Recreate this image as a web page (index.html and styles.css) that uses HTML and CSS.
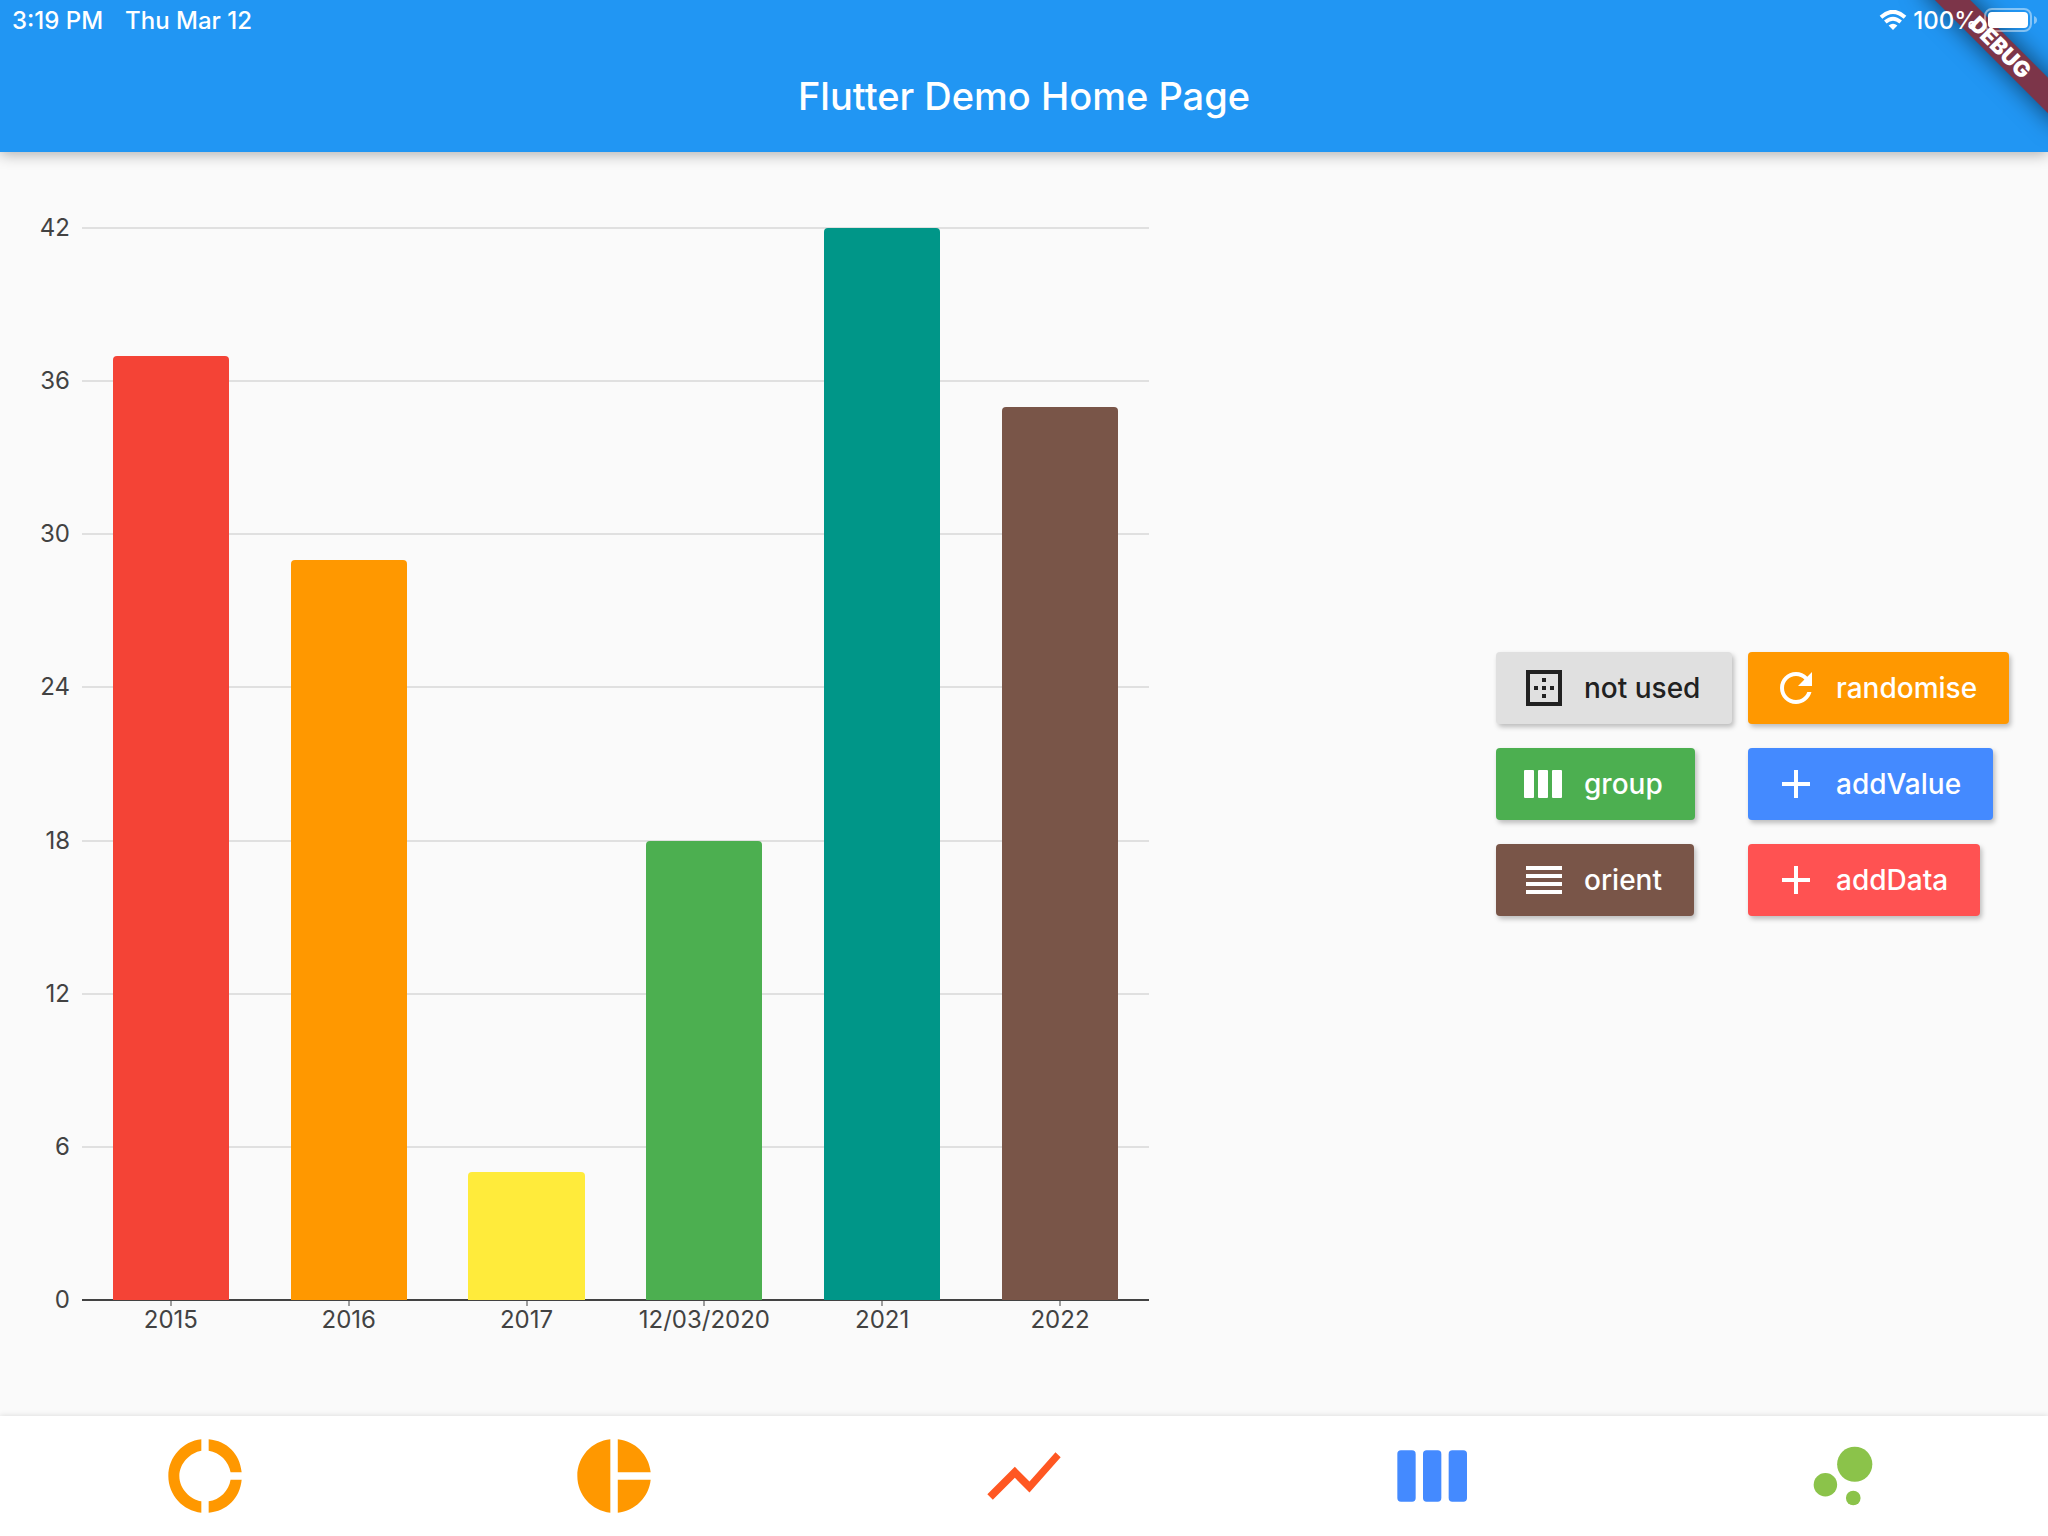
FILE: index.html
```html
<!DOCTYPE html>
<html lang="en">
<head>
<meta charset="utf-8">
<meta name="viewport" content="width=device-width, initial-scale=1">
<title>Flutter Demo Home Page</title>
<link rel="stylesheet" href="styles.css">
</head>
<body>
<header class="app-bar">
  <div class="debug-banner">DEBUG</div>
  <div class="status">
    <span>3:19 PM</span>
    <span class="status-date">Thu Mar 12</span>
    <svg class="wifi" viewBox="0 0 28 20" aria-hidden="true">
      <path d="M2 7.200Q14-3.600 26 7.200" fill="none" stroke="#fff" stroke-width="4"/>
      <path d="M6.300 12Q14 5.400 21.700 12" fill="none" stroke="#fff" stroke-width="3.800"/>
      <path d="M14 20l-4.400-4.500q4.400-3.600 8.800 0z" fill="#fff"/>
    </svg>
    <span>100%</span>
    <svg class="battery" viewBox="0 0 54 24" aria-hidden="true">
      <rect x="1" y="1" width="46" height="22" rx="7" fill="none" stroke="#fff" stroke-opacity=".45" stroke-width="2"/>
      <rect x="4" y="4" width="40" height="16" rx="4" fill="#fff"/>
      <path d="M50 8q3 1 3 4t-3 4z" fill="#fff" fill-opacity=".45"/>
    </svg>
  </div>
  <h1 class="title">Flutter Demo Home Page</h1>
</header>

<main class="content">
  <section class="chart" aria-label="Bar chart">
    <div class="plot">
      <ol class="scale">
        <li>42</li>
        <li>36</li>
        <li>30</li>
        <li>24</li>
        <li>18</li>
        <li>12</li>
        <li>6</li>
        <li class="axis">0</li>
      </ol>
      <div class="bars">
        <div class="bar red" style="height: 88.1%"></div>
        <div class="bar orange" style="height: 69.05%"></div>
        <div class="bar yellow" style="height: 11.9%"></div>
        <div class="bar green" style="height: 42.86%"></div>
        <div class="bar teal" style="height: 100%"></div>
        <div class="bar brown" style="height: 83.33%"></div>
      </div>
    </div>
    <ol class="categories">
      <li>2015</li>
      <li>2016</li>
      <li>2017</li>
      <li>12/03/2020</li>
      <li>2021</li>
      <li>2022</li>
    </ol>
  </section>

  <section class="controls" aria-label="Chart controls">
    <button class="button plain" type="button">
      <svg class="icon" viewBox="0 0 24 24" aria-hidden="true"><path d="M13 7h-2v2h2V7zm0 4h-2v2h2v-2zm4 0h-2v2h2v-2zM3 3v18h18V3H3zm16 16H5V5h14v14zm-6-4h-2v2h2v-2zm-4-4H7v2h2v-2z"/></svg>
      not used
    </button>
    <button class="button orange" type="button">
      <svg class="icon" viewBox="0 0 24 24" aria-hidden="true"><path d="M17.65 6.35C16.2 4.900 14.210 4 12 4c-4.420 0-7.990 3.580-7.990 8s3.570 8 7.990 8c3.730 0 6.840-2.550 7.730-6h-2.080c-.82 2.330-3.040 4-5.650 4-3.310 0-6-2.690-6-6s2.690-6 6-6c1.660 0 3.140.69 4.220 1.780L13 11h7V4l-2.350 2.350z"/></svg>
      randomise
    </button>
    <button class="button green" type="button">
      <svg class="icon" viewBox="0 0 24 24" aria-hidden="true"><rect x="2" y="5" width="5" height="14" rx=".5"/><rect x="9" y="5" width="5" height="14" rx=".5"/><rect x="16" y="5" width="5" height="14" rx=".5"/></svg>
      group
    </button>
    <button class="button blue" type="button">
      <svg class="icon" viewBox="0 0 24 24" aria-hidden="true"><path d="M19 13h-6v6h-2v-6H5v-2h6V5h2v6h6v2z"/></svg>
      addValue
    </button>
    <button class="button brown" type="button">
      <svg class="icon" viewBox="0 0 24 24" aria-hidden="true"><path d="M3 15h18v-2H3v2zm0 4h18v-2H3v2zm0-8h18V9H3v2zm0-6v2h18V5H3z"/></svg>
      orient
    </button>
    <button class="button coral" type="button">
      <svg class="icon" viewBox="0 0 24 24" aria-hidden="true"><path d="M19 13h-6v6h-2v-6H5v-2h6V5h2v6h6v2z"/></svg>
      addData
    </button>
  </section>
</main>

<nav class="tabs" aria-label="Chart types">
  <a class="tab amber" href="#donut" aria-label="Donut chart"><svg class="tab-icon" viewBox="0 0 24 24"><path d="M11 5.080V2c-5 .5-9 4.810-9 10s4 9.500 9 10v-3.080c-3-.48-6-3.400-6-6.920s3-6.440 6-6.920zM18.970 11H22c-.47-5-4-8.530-9-9v3.080C16 5.510 18.540 8 18.970 11zM13 18.920V22c5-.47 8.530-4 9-9h-3.030c-.43 3-2.970 5.490-5.970 5.920z"/></svg></a>
  <a class="tab amber" href="#pie" aria-label="Pie chart"><svg class="tab-icon" viewBox="0 0 24 24"><path d="M11 2v20c-5.070-.5-9-4.790-9-10s3.930-9.500 9-10zm2.030 0v8.990H22c-.47-4.740-4.240-8.520-8.970-8.990zm0 11.010V22c4.740-.47 8.500-4.250 8.970-8.990h-8.970z"/></svg></a>
  <a class="tab vermilion" href="#line" aria-label="Line chart"><svg class="tab-icon" viewBox="0 0 24 24"><path d="M3.500 18.490l6-6.010 4 4L22 6.920l-1.410-1.410-7.090 7.970-4-4L2 16.990z"/></svg></a>
  <a class="tab azure" href="#bar" aria-label="Bar chart" aria-current="page"><svg class="tab-icon" viewBox="0 0 24 24"><rect x="2" y="5" width="5" height="14" rx="1"/><rect x="9" y="5" width="5" height="14" rx="1"/><rect x="16" y="5" width="5" height="14" rx="1"/></svg></a>
  <a class="tab lime" href="#bubble" aria-label="Bubble chart"><svg class="tab-icon" viewBox="0 0 24 24"><circle cx="7.200" cy="14.400" r="3.200"/><circle cx="14.800" cy="18" r="2"/><circle cx="15.200" cy="8.800" r="4.800"/></svg></a>
</nav>
</body>
</html>
```
FILE: styles.css
```css
* {
  box-sizing: border-box;
}

body {
  display: flex;
  flex-direction: column;
  min-height: 100vh;
  margin: 0;
  background: #fafafa;
  font-family: Inter, "Liberation Sans", sans-serif;
}

ol {
  margin: 0;
  padding: 0;
  list-style: none;
}

/* App bar */

.app-bar {
  position: relative;
  overflow: hidden;
  background: #2196f3;
  box-shadow: 0 2px 14px rgba(0, 0, 0, 0.32);
  color: #fff;
}

.status {
  position: relative;
  display: flex;
  align-items: center;
  height: 40px;
  padding: 0 10px 0 12px;
  font-size: 24px;
  font-weight: 500;
}

.status-date {
  margin-left: 22px;
}

.wifi {
  width: 28px;
  height: 20px;
  margin: 0 6px 0 auto;
}

.battery {
  width: 54px;
  height: 24px;
  margin-left: 6px;
}

.title {
  margin: 0;
  font-size: 38px;
  font-weight: 500;
  line-height: 112px;
  text-align: center;
}

.debug-banner {
  position: absolute;
  top: 35px;
  right: -52px;
  width: 200px;
  background: #7c3549;
  box-shadow: 0 0 24px rgba(0, 0, 0, 0.6);
  font-size: 22px;
  font-weight: 900;
  line-height: 25px;
  text-align: center;
  transform: rotate(45deg);
}

/* Chart */

.content {
  display: flex;
  flex: 1;
  justify-content: space-between;
}

.chart {
  display: flex;
  flex-direction: column;
  width: 56.1%;
  padding: 75px 0 82px;
  color: #424242;
  font-size: 24px;
}

.plot {
  display: grid;
  flex: 1;
}

.scale,
.bars {
  grid-area: 1 / 1;
}

.scale {
  display: flex;
  flex-direction: column;
  justify-content: space-between;
}

.scale li {
  display: grid;
  grid-template-columns: 70px 1fr;
  gap: 12px;
  align-items: center;
  height: 2px;
  line-height: 2px;
  text-align: right;
}

.scale li::after {
  height: 2px;
  background: #e0e0e0;
  content: "";
}

.scale .axis::after {
  background: #424242;
}

.bars {
  display: flex;
  align-items: flex-end;
  justify-content: space-around;
  margin: 1px 0 1px 82px;
}

.bar {
  width: 10.9%;
  border-radius: 4px 4px 0 0;
}

.categories {
  display: grid;
  grid-template-columns: repeat(6, 1fr);
  margin-left: 82px;
  line-height: 28px;
}

.categories li {
  display: flex;
  flex-direction: column;
  align-items: center;
}

.categories li::before {
  width: 2px;
  height: 5px;
  background: #9e9e9e;
  content: "";
}

/* Controls */

.controls {
  display: grid;
  grid-template-columns: 236px 260px;
  gap: 24px 16px;
  align-content: center;
  justify-items: start;
  padding: 24px 40px 24px 24px;
}

.button {
  display: flex;
  gap: 16px;
  align-items: center;
  height: 72px;
  padding: 0 32px 0 24px;
  border: 0;
  border-radius: 4px;
  box-shadow: 2px 3px 5px rgba(0, 0, 0, 0.25);
  color: #fff;
  font-family: inherit;
  font-size: 28px;
  font-weight: 500;
  white-space: nowrap;
}

.plain {
  background: #e0e0e0;
  color: #212121;
}

.icon {
  width: 48px;
  height: 48px;
  fill: currentColor;
}

.red {
  background: #f44336;
}

.orange {
  background: #ff9800;
}

.yellow {
  background: #ffeb3b;
}

.green {
  background: #4caf50;
}

.teal {
  background: #009688;
}

.brown {
  background: #795548;
}

.blue {
  background: #448aff;
}

.coral {
  background: #ff5252;
}

/* Bottom navigation */

.tabs {
  display: grid;
  grid-template-columns: repeat(5, 1fr);
  background: #fff;
  box-shadow: 0 0 6px rgba(0, 0, 0, 0.14);
}

.tab {
  display: flex;
  align-items: center;
  justify-content: center;
  height: 120px;
}

.tab-icon {
  width: 88px;
  height: 88px;
  fill: currentColor;
}

.amber {
  color: #ff9800;
}

.vermilion {
  color: #ff5722;
}

.azure {
  color: #448aff;
}

.lime {
  color: #8bc34a;
}
```
